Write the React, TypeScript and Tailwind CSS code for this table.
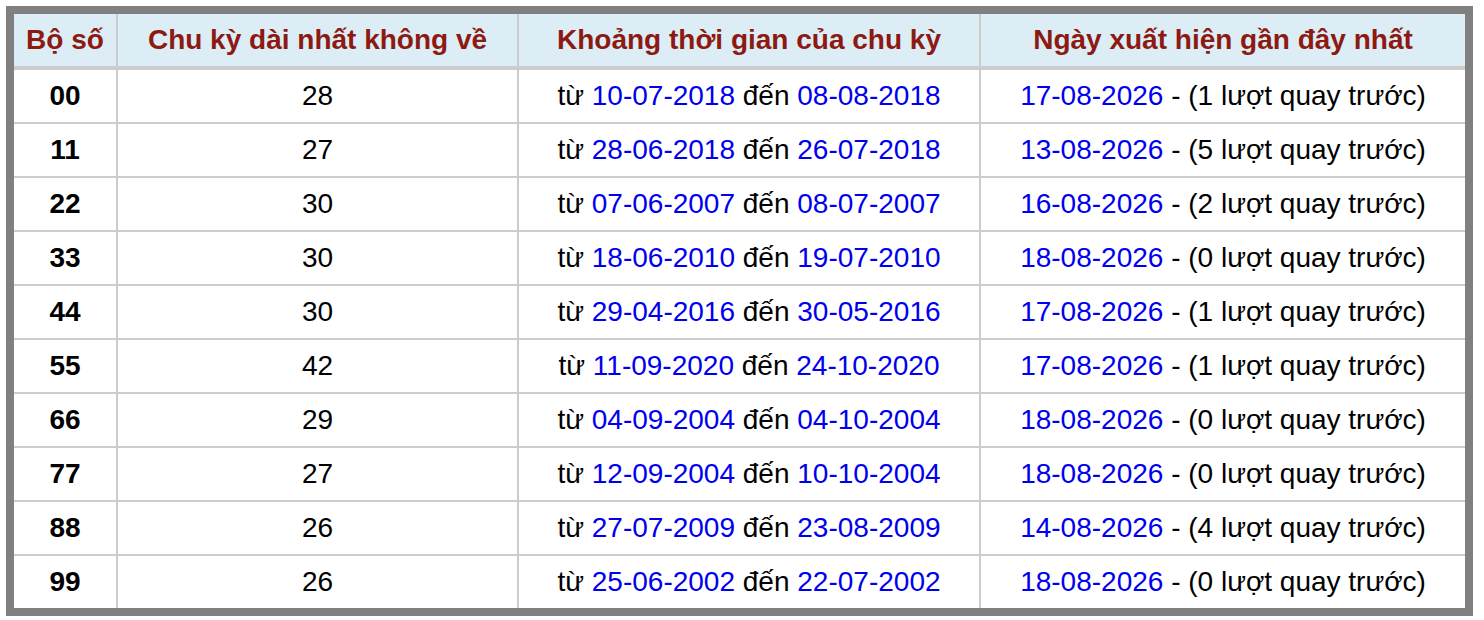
import React from "react";

const rows = [
  ["00", "28", "10-07-2018", "08-08-2018", "17-08-2026", "1"],
  ["11", "27", "28-06-2018", "26-07-2018", "13-08-2026", "5"],
  ["22", "30", "07-06-2007", "08-07-2007", "16-08-2026", "2"],
  ["33", "30", "18-06-2010", "19-07-2010", "18-08-2026", "0"],
  ["44", "30", "29-04-2016", "30-05-2016", "17-08-2026", "1"],
  ["55", "42", "11-09-2020", "24-10-2020", "17-08-2026", "1"],
  ["66", "29", "04-09-2004", "04-10-2004", "18-08-2026", "0"],
  ["77", "27", "12-09-2004", "10-10-2004", "18-08-2026", "0"],
  ["88", "26", "27-07-2009", "23-08-2009", "14-08-2026", "4"],
  ["99", "26", "25-06-2002", "22-07-2002", "18-08-2026", "0"],
];

const cell = "bg-white flex items-center justify-center whitespace-nowrap";
const grid = "grid grid-cols-[102px_399px_460px_484px] gap-x-[2px] bg-[#cccccc]";

export default function App() {
  return (
    <div
      className="w-[1484px] h-[620px] bg-white pt-[6px] pl-[6px]"
      style={{ fontFamily: '"Liberation Sans", Arial, Helvetica, sans-serif' }}
    >
      <div className="w-[1467px] h-[610px] border-[8px] border-[#808080] bg-white flex flex-col text-[28px] leading-none">
        <div className={`${grid} border-b-[4px] border-[#cccccc]`}>
          {["Bộ số", "Chu kỳ dài nhất không về", "Khoảng thời gian của chu kỳ", "Ngày xuất hiện gần đây nhất"].map((h) => (
            <div key={h} className="h-[52px] bg-[#ddedf6] flex items-center justify-center font-bold text-[#8c1a12] whitespace-nowrap">
              {h}
            </div>
          ))}
        </div>
        <div className="flex flex-col gap-y-[2px] bg-[#cccccc]">
          {rows.map((r) => (
            <div key={r[0]} className={grid}>
              <div className={`${cell} h-[52px] font-bold text-black`}>{r[0]}</div>
              <div className={`${cell} h-[52px] text-black`}>{r[1]}</div>
              <div className={`${cell} h-[52px] text-black`}>
                <span>
                  từ <span className="text-[#0000ee]">{r[2]}</span> đến{" "}
                  <span className="text-[#0000ee]">{r[3]}</span>
                </span>
              </div>
              <div className={`${cell} h-[52px] text-black`}>
                <span>
                  <span className="text-[#0000ee]">{r[4]}</span> - ({r[5]} lượt quay trước)
                </span>
              </div>
            </div>
          ))}
        </div>
      </div>
    </div>
  );
}
